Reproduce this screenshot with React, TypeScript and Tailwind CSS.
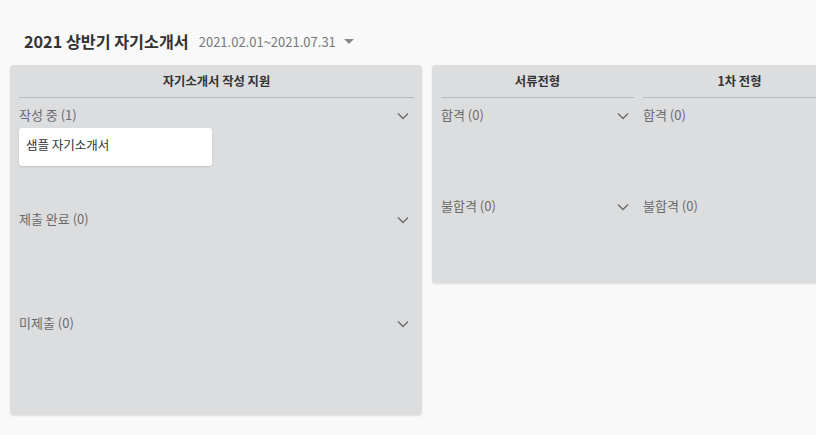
const font = { fontFamily: '"Noto Sans CJK KR", "Noto Sans", sans-serif' };

function Chevron() {
  return (
    <svg width="12" height="8" viewBox="0 0 12 8" className="shrink-0 mt-[1px]">
      <polyline points="1,1.5 6,6.5 11,1.5" fill="none" stroke="#6b6b6b" strokeWidth="1.4" />
    </svg>
  );
}

function Section({ label, height, children }: { label: string; height: string; children?: React.ReactNode }) {
  return (
    <div className={`${height} pt-[8px]`}>
      <div className="flex items-center justify-between h-[18px] pr-[5px]">
        <span className="text-[13px] text-[#6a6a6a]">{label}</span>
        <Chevron />
      </div>
      {children}
    </div>
  );
}

function Column({ title, sections }: { title: string; sections: string[] }) {
  return (
    <div className="w-[193px] shrink-0">
      <div className="h-[33px] flex items-center justify-center border-b border-[#b9babc] text-[12.3px] font-bold text-[#333]">
        {title}
      </div>
      {sections.map((s) => (
        <Section key={s} label={s} height="h-[91px]" />
      ))}
    </div>
  );
}

export default function App() {
  return (
    <div className="w-[816px] h-[435px] overflow-hidden bg-[#f9f9f9]" style={font}>
      <div className="flex items-center pl-[24px] pt-[27px] h-[65px] pb-[10px]">
        <h1 className="text-[16.2px] font-bold text-[#333] leading-none">2021 상반기 자기소개서</h1>
        <span className="ml-[10px] text-[13px] text-[#777] leading-none">2021.02.01~2021.07.31</span>
        <svg width="10" height="6" viewBox="0 0 10 6" className="ml-[8px] mt-[2px]">
          <polygon points="0,0 10,0 5,5" fill="#8a8a8a" />
        </svg>
      </div>
      <div className="flex gap-[10px] pl-[10px] items-start">
        <div className="w-[412px] shrink-0 bg-[#dcdddf] rounded-[4px] shadow-[0_1px_2px_rgba(0,0,0,0.12)] pl-[9px] pr-[8px] pb-[5px]">
          <div className="h-[33px] flex items-center justify-center border-b border-[#b9babc] text-[12.3px] font-bold text-[#333]">
            자기소개서 작성 지원
          </div>
          <Section label="작성 중 (1)" height="h-[104px]">
            <div className="mt-[4px] w-[193px] h-[38px] bg-white rounded-[3px] shadow-[0_1px_2px_rgba(0,0,0,0.12)] flex items-center px-[7px] pb-[4px] text-[12.5px] text-[#333]">
              샘플 자기소개서
            </div>
          </Section>
          <Section label="제출 완료 (0)" height="h-[104px]" />
          <Section label="미제출 (0)" height="h-[104px]" />
        </div>
        <div className="shrink-0 bg-[#dcdddf] rounded-[4px] shadow-[0_1px_2px_rgba(0,0,0,0.12)] px-[9px] pb-[3px] flex gap-[9px]">
          <Column title="서류전형" sections={["합격 (0)", "불합격 (0)"]} />
          <Column title="1차 전형" sections={["합격 (0)", "불합격 (0)"]} />
        </div>
      </div>
    </div>
  );
}
